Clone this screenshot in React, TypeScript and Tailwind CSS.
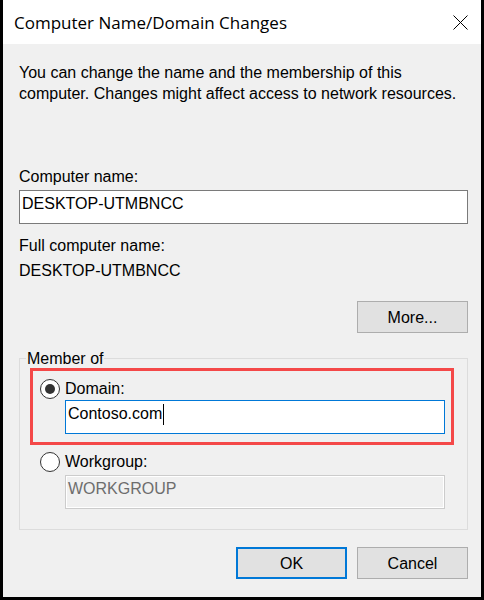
import React from 'react';

const ARIAL = { fontFamily: '"Liberation Sans", Arial, sans-serif' };

function Radio({ checked }: { checked?: boolean }) {
  return (
    <span className="flex h-[20px] w-[20px] shrink-0 items-center justify-center rounded-full border border-[#333333] bg-white">
      {checked && <span className="h-[10px] w-[10px] rounded-full bg-[#333333]" />}
    </span>
  );
}

function DialogButton({ label, primary = false }: { label: string; primary?: boolean }) {
  return (
    <button
      type="button"
      className={`flex h-[32px] w-[111px] items-center justify-center bg-[#e1e1e1] text-[16px] text-black ${
        primary ? 'border-2 border-[#0078d7]' : 'border border-[#adadad]'
      }`}
    >
      {label}
    </button>
  );
}

export default function App() {
  return (
    <div
      className="flex h-[600px] w-[484px] flex-col border-x-[3px] border-b-[3px] border-black bg-[#f0f0f0] text-black"
      style={ARIAL}
    >
      {/* title bar */}
      <div className="flex h-[44px] shrink-0 items-center justify-between bg-white pl-[11px] pr-[13px]">
        <span
          className="mt-[1px] text-[17px] leading-none text-black"
          style={{ fontFamily: '"Segoe UI", "Open Sans", sans-serif' }}
        >
          Computer Name/Domain Changes
        </span>
        <svg width="15" height="15" viewBox="0 0 15 15" className="mt-[1px]">
          <path d="M0.5 0.5 L14.5 14.5 M14.5 0.5 L0.5 14.5" stroke="#000" strokeWidth="1" fill="none" />
        </svg>
      </div>

      {/* body */}
      <div className="flex flex-1 flex-col pl-[16px] pr-[13px] pt-[18px] text-[16px] leading-[21px]">
        <p>
          You can change the name and the membership of this
          <br />
          computer. Changes might affect access to network resources.
        </p>

        <label className="mt-[62px]">Computer name:</label>
        <div className="mt-[3px] h-[34px] border border-[#7a7a7a] bg-white px-[2px] pt-[2px]">
          DESKTOP-UTMBNCC
        </div>

        <span className="mt-[11px]">Full computer name:</span>
        <span className="mt-[4px]">DESKTOP-UTMBNCC</span>

        <div className="mt-[20px] flex justify-end">
          <DialogButton label="More..." />
        </div>

        <fieldset className="mt-[16px] h-[181px] border border-[#dcdcdc] pr-[13px]">
          <legend className="ml-[6px] px-[1px] leading-[19px]">Member of</legend>

          <div className="ml-[10px] border-[3px] border-[#f44848] pb-[8px] pl-[7px] pr-[6px] pt-[7px]">
            <div className="flex items-center gap-[5px]">
              <Radio checked />
              <span>Domain:</span>
            </div>
            <div className="mt-px ml-[25px] flex h-[34px] items-start border border-[#0078d7] bg-white px-[2px] pt-[2px]">
              <span>Contoso.com</span>
              <span className="ml-px mt-px inline-block h-[21px] w-px bg-black" />
            </div>
          </div>

          <div className="ml-[10px] pl-[10px] pr-[9px] pt-[6px]">
            <div className="flex items-center gap-[5px]">
              <Radio />
              <span>Workgroup:</span>
            </div>
            <div className="mt-[3px] ml-[25px] h-[34px] border border-[#cccccc] px-[2px] pt-[2px] text-[#6d6d6d] shadow-[inset_0_0_0_1px_#ffffff]">
              WORKGROUP
            </div>
          </div>
        </fieldset>

        <div className="mt-[17px] flex justify-end gap-[10px]">
          <DialogButton label="OK" primary />
          <DialogButton label="Cancel" />
        </div>
      </div>
    </div>
  );
}
